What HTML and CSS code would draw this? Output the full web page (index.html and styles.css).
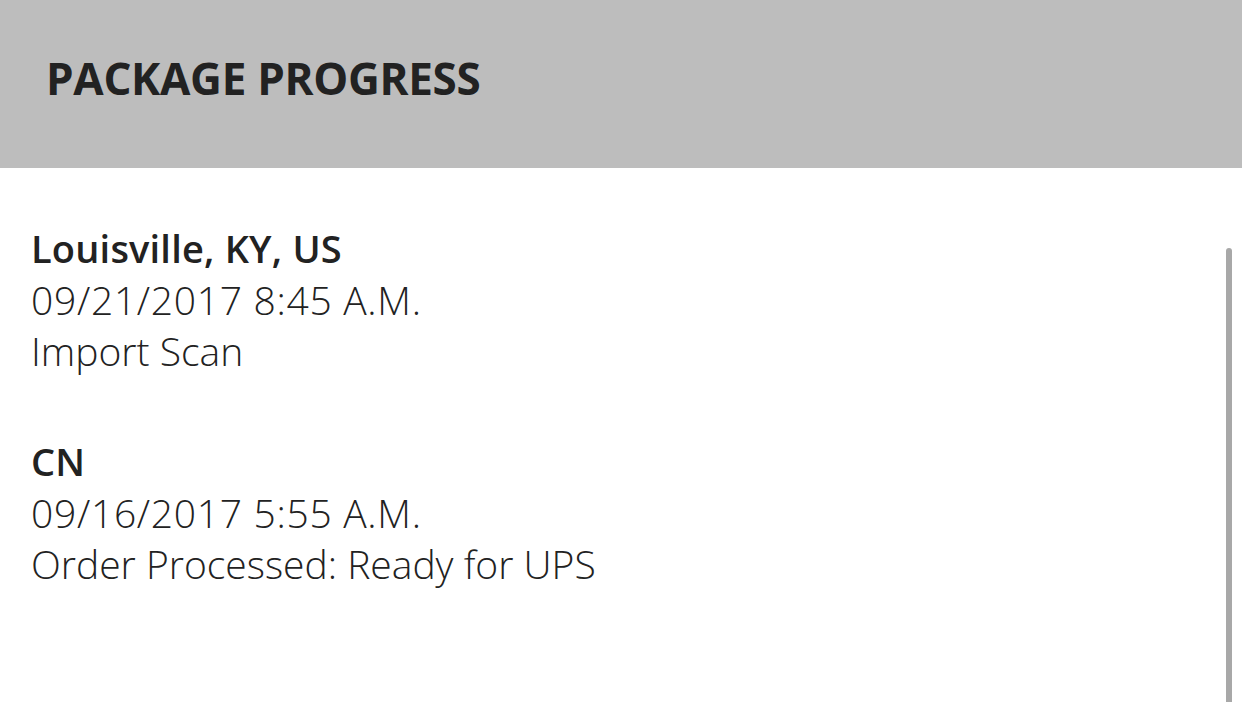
FILE: index.html
```html
<!DOCTYPE html>
<html>
<head>
<meta charset="utf-8">
<link rel="stylesheet" href="styles.css">
</head>
<body>
<header class="header">
  <h1 class="title">PACKAGE PROGRESS</h1>
</header>
<main class="content">
  <div class="list">
    <section class="event">
      <div class="place">Louisville, KY, US</div>
      <div class="line date">09/21/2017 8:45 A.M.</div>
      <div class="line">Import Scan</div>
    </section>
    <section class="event">
      <div class="place">CN</div>
      <div class="line date">09/16/2017 5:55 A.M.</div>
      <div class="line">Order Processed: Ready for UPS</div>
    </section>
  </div>
  <div class="scrollbar"></div>
</main>
</body>
</html>
```

FILE: styles.css
```css
html, body {
  margin: 0;
  padding: 0;
  background: #ffffff;
  font-family: "Open Sans", "Noto Sans", sans-serif;
  color: #222222;
  height: 702px;
  overflow: hidden;
}
.header {
  height: 168px;
  background: #bdbdbd;
  padding: 0 0 0 46px;
  box-sizing: border-box;
}
.title {
  margin: 0;
  padding-top: 50px;
  font-size: 44px;
  line-height: 56px;
  font-weight: 700;
  letter-spacing: -0.3px;
  color: #222222;
}
.content {
  display: flex;
  justify-content: space-between;
  height: 534px;
}
.list {
  padding: 55px 0 0 31px;
  display: flex;
  flex-direction: column;
  gap: 60px;
}
.place {
  font-weight: 600;
  font-size: 38px;
  line-height: 51px;
  letter-spacing: 0.2px;
}
.line {
  font-weight: 300;
  font-size: 39px;
  line-height: 51px;
}
.date {
  letter-spacing: 0.7px;
}
.scrollbar {
  width: 6px;
  margin: 80px 10px 0 0;
  background: #a8a8a8;
  border-radius: 3px 3px 0 0;
}
```
